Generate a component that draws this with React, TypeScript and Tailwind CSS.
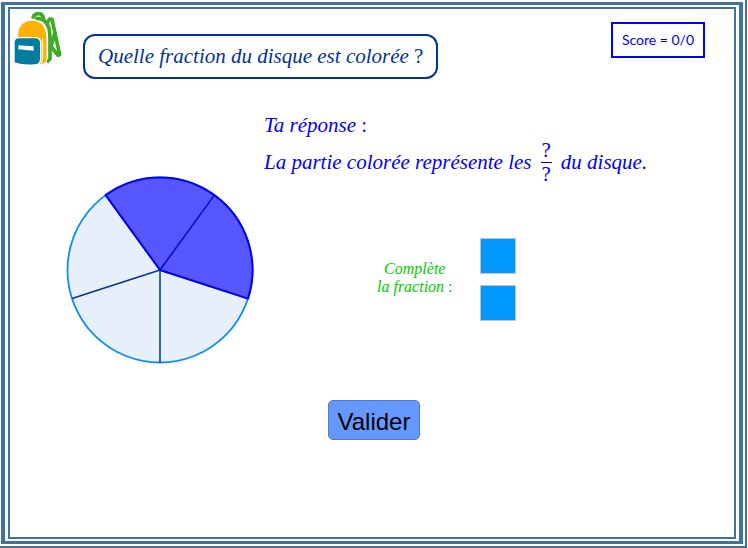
import { useState } from "react";

const MATH = "font-['Liberation_Serif',serif] italic";
const SECTORS = 5;
const COLORED = 2;
const RADIUS = 92.5;

function point(index: number) {
  const angle = (18 - index * (360 / SECTORS)) * (Math.PI / 180);
  return { x: RADIUS * Math.cos(angle), y: RADIUS * Math.sin(angle) };
}

function Backpack() {
  return (
    <svg viewBox="6 6 144 162" className="h-[54px] w-12 shrink-0" role="img" aria-label="Cartable">
      <path d="M63 26 C64 14 71 11 80 11 C90 11 94 18 95 30" fill="none" stroke="#3dab26" strokeWidth="11" />
      <path d="M70 26 C90 22 106 36 111 56 C115 72 114 92 114 110 V146 L105 157" fill="none" stroke="#3dab26" strokeWidth="11" />
      <path
        d="M102 44 L113 27 L120 28 L143 134 L138 136 L117 110 L130 64"
        fill="none"
        stroke="#3dab26"
        strokeWidth="11"
        strokeLinejoin="round"
      />
      <path
        d="M16 84 C16 48 34 31 60 31 C90 31 105 54 105 88 V144 C105 156 98 163 84 164 H60 V84 Z"
        fill="#ffb000"
        stroke="#fff"
        strokeWidth="3"
      />
      <path d="M92 84 V142 C92 152 90 158 86 163" fill="none" stroke="#fff" strokeWidth="3" />
      <path
        d="M6 98 C6 88 12 83 22 83 H70 C81 83 86 89 86 99 V146 C86 158 80 165 68 165 C46 167 24 165 6 159 Z"
        fill="#007d9e"
        stroke="#fff"
        strokeWidth="4"
      />
      <path d="M19 106 L65 109 V122 L19 118 Z" fill="#fff" />
    </svg>
  );
}

function Disk() {
  const start = point(0);
  const end = point(COLORED);
  return (
    <svg viewBox="-94 -94 188 188" className="mt-[97px] ml-14 size-[188px] shrink-0" role="img" aria-label="Disque partagé en cinq">
      <circle r={RADIUS} fill="#e7f0fa" stroke="#0f8ff0" strokeWidth="1.800" />
      {Array.from({ length: SECTORS }, (_, i) => {
        const p = point(i);
        return <line key={i} x1="0" y1="0" x2={p.x} y2={p.y} stroke="#003399" strokeWidth="1.500" />;
      })}
      <path
        d={`M0 0 L${start.x} ${start.y} A${RADIUS} ${RADIUS} 0 0 0 ${end.x} ${end.y} Z`}
        fill="#5757ff"
        stroke="#0000f5"
        strokeWidth="2"
        strokeLinejoin="round"
      />
      <line x1="0" y1="0" x2={point(1).x} y2={point(1).y} stroke="#0505d0" strokeWidth="1.500" />
    </svg>
  );
}

function FractionBox({ label }: { label: string }) {
  const [value, setValue] = useState("");
  return (
    <input
      aria-label={label}
      inputMode="numeric"
      value={value}
      onChange={(e) => setValue(e.target.value)}
      className="size-9 border border-[#c4c4c4] bg-[#0099ff] text-center text-xl text-white"
    />
  );
}

export default function App() {
  return (
    <div className="flex min-h-screen bg-white pr-px">
      <div className="flex flex-1 border-r-2 border-b-2 border-[#4272a0] pt-[2px] pr-[2px] pb-[2px] pl-px">
        <div className="flex flex-1 border-x-4 border-y-3 border-[#4272a0] px-[3px] py-[2px]">
          <main className="flex-1 border-2 border-[#4272a0]">
            <header className="flex items-start pt-[3px] pr-[29px] pl-1">
              <Backpack />
              <h1 className={`${MATH} mt-[22px] ml-[21px] rounded-xl border-2 border-[#003399] px-[13px] py-2 text-[21px] leading-[25px] whitespace-nowrap text-[#003399]`}>
                Quelle fraction du disque est colorée <span className="not-italic">?</span>
              </h1>
              <p className="mt-[10px] ml-auto border-2 border-[#0000ff] px-[9px] font-['Lato',sans-serif] text-sm leading-8 whitespace-nowrap text-[#0000ff]">
                Score = 0/0
              </p>
            </header>
            <div className="flex gap-[10px]">
              <Disk />
              <section className="pt-8">
                <div className={`${MATH} text-[21px] leading-7 whitespace-nowrap text-[#0000ff]`}>
                  <p>Ta réponse <span className="not-italic">:</span></p>
                  <p className="flex items-center gap-[9px]">
                    <span>La partie colorée représente les</span>
                    <span className="flex flex-col text-center leading-[22px] not-italic">
                      <span className="border-b border-[#0000ff] px-px pb-px">?</span>
                      <span>?</span>
                    </span>
                    <span>du disque.</span>
                  </p>
                </div>
                <div className="mt-[53px] ml-[113px] flex items-center gap-[27px]">
                  <p className={`${MATH} pb-1 text-center text-base leading-[18px] whitespace-nowrap text-[#00cc00]`}>
                    Complète
                    <br />
                    la fraction <span className="not-italic">:</span>
                  </p>
                  <div className="flex flex-col gap-[11px]">
                    <FractionBox label="Numérateur" />
                    <FractionBox label="Dénominateur" />
                  </div>
                </div>
              </section>
            </div>
            <div className="mt-9 flex justify-center pl-1">
              <button
                type="button"
                className="rounded-[5px] border border-[#5079c9] bg-[#6699ff] px-[9px] pt-1 font-['Liberation_Sans',sans-serif] text-2xl leading-[34px] text-black"
              >
                Valider
              </button>
            </div>
          </main>
        </div>
      </div>
    </div>
  );
}
